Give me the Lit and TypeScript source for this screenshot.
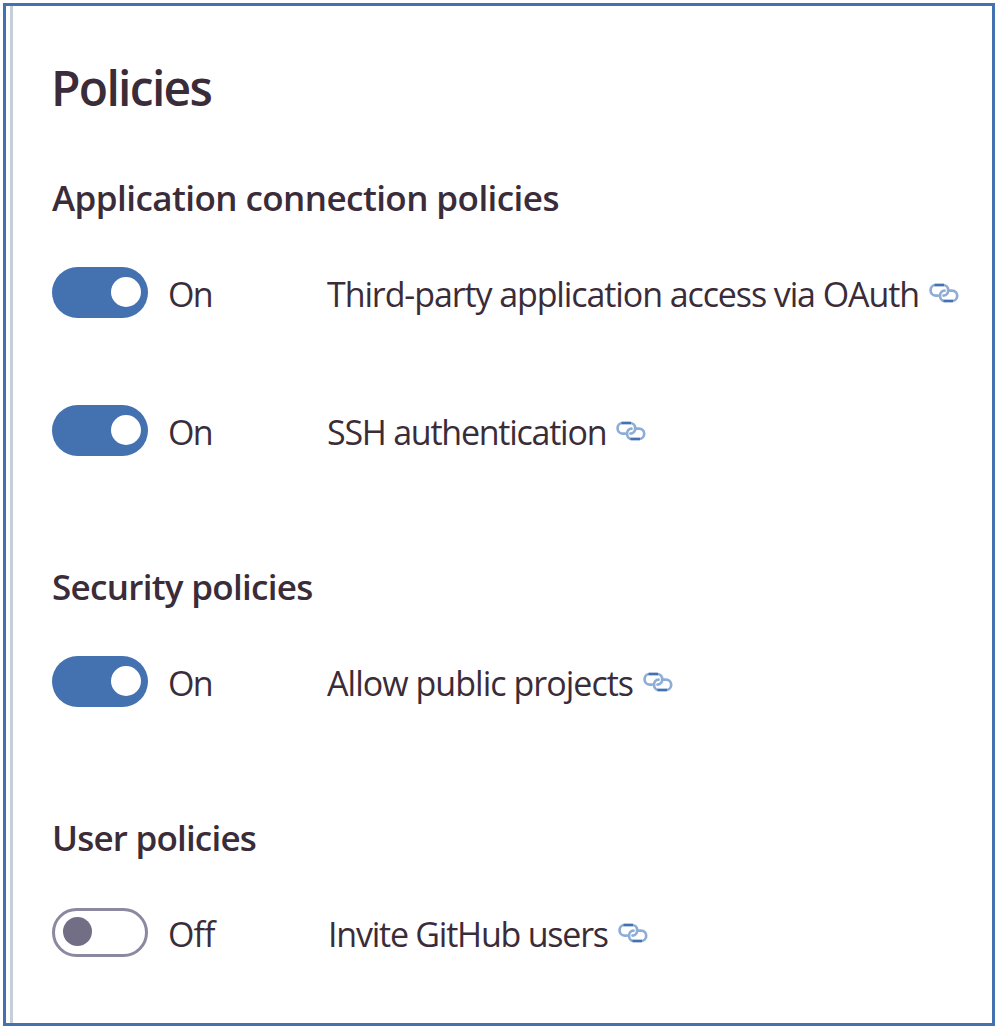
import { LitElement, html, css, svg } from "lit";
import { customElement, property } from "lit/decorators.js";
import { classMap } from "lit/directives/class-map.js";

interface Policy { name: string; on: boolean; tracking: number; }
interface Group { title: string; tracking: number; policies: Policy[]; }

const GROUPS: Group[] = [
  { title: "Application connection policies", tracking: -0.56, policies: [
    { name: "Third-party application access via OAuth", on: true, tracking: -1.1 },
    { name: "SSH authentication", on: true, tracking: -1.25 },
  ] },
  { title: "Security policies", tracking: -0.7, policies: [
    { name: "Allow public projects", on: true, tracking: -0.97 },
  ] },
  { title: "User policies", tracking: -0.8, policies: [
    { name: "Invite GitHub users", on: false, tracking: -1.23 },
  ] },
];

const linkIcon = svg`
  <g fill="none" stroke="#8eadd6" stroke-width="2.700" stroke-linecap="round">
    <path d="M9 12.600H6.500C3.500 12.600 1.600 10 1.600 7.300S3.500 2 6.500 2H14c3 0 5.200 2.300 5.200 5.300 0 2.700-1.700 5.300-4.700 5.300"/>
    <path d="M19.500 7.700H23c3.200 0 5.200 2.300 5.200 5s-2 5.300-5.200 5.300H16c-3 0-5-2.300-5-5 0-3 2-5.300 4.500-5.300"/>
    <path d="M5.500 2H15M14.500 18H24" stroke="#4472b0" stroke-width="2.500" stroke-linecap="butt"/>
  </g>`;

@customElement("policy-row")
class PolicyRow extends LitElement {
  @property({ attribute: false }) policy!: Policy;

  static styles = css`
    :host { display: block; }
    .row { display: flex; align-items: center; height: 52px; white-space: nowrap; }
    .toggle { box-sizing: border-box; width: 96px; height: 51px; border-radius: 26px; background: #4472b0;
      display: flex; align-items: center; justify-content: flex-end; padding-right: 7px; flex: none; }
    .knob { width: 30px; height: 30px; border-radius: 50%; background: #fff; }
    .toggle.off { height: 49px; background: #fff; border: 3px solid #8c88a0; justify-content: flex-start; padding: 0 0 2px 8px; }
    .toggle.off .knob { width: 29px; height: 29px; background: #716e86; }
    .state, .name { line-height: 52px; padding-top: 4px; }
    .state { width: 159px; margin-left: 20px; letter-spacing: -1.8px; flex: none; }
    .off-state { width: 160px; letter-spacing: -1px; }
    .link { width: 31px; height: 22px; margin: 3px 0 0 10px; flex: none; }
  `;

  render() {
    const p = this.policy;
    return html`<div class="row">
      <div class=${classMap({ toggle: true, off: !p.on })} role="switch" aria-checked=${p.on}><div class="knob"></div></div>
      <span class=${classMap({ state: true, "off-state": !p.on })}>${p.on ? "On" : "Off"}</span>
      <span class="name" style="letter-spacing:${p.tracking}px">${p.name}</span>
      <svg class="link" viewBox="0 0 31 22">${linkIcon}</svg>
    </div>`;
  }
}

@customElement("app-root")
class AppRoot extends LitElement {
  static styles = css`
    :host { display: block; box-sizing: border-box; height: 1031px; padding: 3px 5px 5px 3px; background: #fff;
      font-family: "Open Sans", "Noto Sans", sans-serif; font-size: 34px; color: #3a2c38; }
    .frame { box-sizing: border-box; height: 1023px; border: 3px solid #4472b0; padding-left: 4px; }
    .panel { box-sizing: border-box; height: 100%; border-left: 3px solid #c6ced8; padding: 52px 0 0 39px; }
    h1, h2 { margin: 0; font-weight: 600; white-space: nowrap; }
    h1 { font-size: 48px; line-height: 60px; letter-spacing: -1.7px; margin: 0 0 56px -1px; }
    h2 { font-size: 35px; line-height: 48px; margin-bottom: 44px; }
    section { display: flex; flex-direction: column; margin-bottom: 107px; }
    policy-row + policy-row { margin-top: 86px; }
  `;

  render() {
    return html`<div class="frame"><main class="panel">
      <h1>Policies</h1>
      ${GROUPS.map((g) => html`<section>
        <h2 style="letter-spacing:${g.tracking}px">${g.title}</h2>
        ${g.policies.map((p) => html`<policy-row .policy=${p}></policy-row>`)}
      </section>`)}
    </main></div>`;
  }
}
